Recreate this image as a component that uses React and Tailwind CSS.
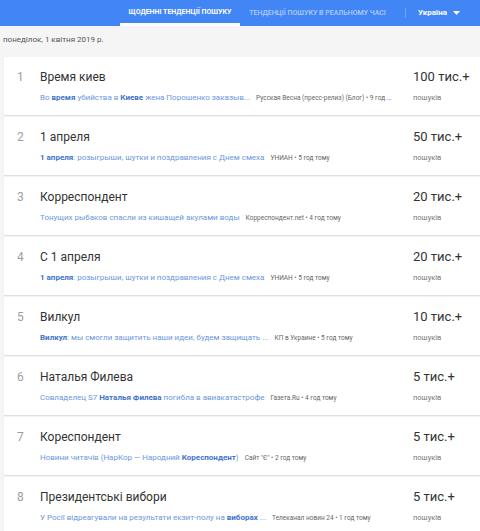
import React from 'react';

const trends = [
  {
    title: 'Время киев',
    count: '100 тис.+',
    parts: [['Во ', false], ['время', true], [' убийства в ', false], ['Киеве', true], [' жена Порошенко заказыв...', false]],
    source: 'Русская Весна (пресс-релиз) (Блог) • 9 год ...',
  },
  {
    title: '1 апреля',
    count: '50 тис.+',
    parts: [['1 апреля', true], [': розыгрыши, шутки и поздравления с Днем смеха', false]],
    source: 'УНИАН • 5 год тому',
  },
  {
    title: 'Корреспондент',
    count: '20 тис.+',
    parts: [['Тонущих рыбаков спасли из кишащей акулами воды', false]],
    source: 'Корреспондент.net • 4 год тому',
  },
  {
    title: 'С 1 апреля',
    count: '20 тис.+',
    parts: [['1 апреля', true], [': розыгрыши, шутки и поздравления с Днем смеха', false]],
    source: 'УНИАН • 5 год тому',
  },
  {
    title: 'Вилкул',
    count: '10 тис.+',
    parts: [['Вилкул', true], [': мы смогли защитить наши идеи, будем защищать ...', false]],
    source: 'КП в Украине • 5 год тому',
  },
  {
    title: 'Наталья Филева',
    count: '5 тис.+',
    parts: [['Совладелец S7 ', false], ['Наталья Филева', true], [' погибла в авиакатастрофе', false]],
    source: 'Газета.Ru • 4 год тому',
  },
  {
    title: 'Кореспондент',
    count: '5 тис.+',
    parts: [['Новини читачів (НарКор — Народний ', false], ['Кореспондент', true], [')', false]],
    source: 'Сайт "Є" • 2 год тому',
  },
  {
    title: 'Президентські вибори',
    count: '5 тис.+',
    parts: [['У Росії відреагували на результати екзит-полу на ', false], ['виборах', true], [' ...', false]],
    source: 'Телеканал новин 24 • 1 год тому',
  },
];

const TrendRow = ({ index, item }) => (
  <div className="flex h-[58px] bg-white pt-[12px] shadow-[0_1px_1px_rgba(0,0,0,0.08)]">
    <div className="w-[36px] shrink-0 pl-[13px] text-[12px] leading-[16px] text-[#9e9e9e]">{index}</div>
    <div className="min-w-0 flex-1">
      <div className="text-[12px] leading-[16px] text-[#333]">{item.title}</div>
      <div className="mt-[8px] flex items-baseline whitespace-nowrap leading-[10px]">
        <span className="text-[8px] text-[#6b97dc]">
          {item.parts.map(([text, bold], i) =>
            bold ? (
              <b key={i} className="font-bold text-[#3f73c9]">{text}</b>
            ) : (
              <span key={i}>{text}</span>
            )
          )}
        </span>
        <span className="ml-[6px] text-[6.5px] text-[#666]">{item.source}</span>
      </div>
    </div>
    <div className="w-[67px] shrink-0">
      <div className="text-[13px] leading-[16px] text-[#333]">{item.count}</div>
      <div className="mt-[8px] text-[7.5px] leading-[10px] text-[#777]">пошуків</div>
    </div>
  </div>
);

const App = () => {
  return (
    <div className="min-h-[531px] w-[480px] overflow-hidden bg-[#f5f5f5] font-['Roboto',sans-serif]">
      <div className="flex h-[26px] items-stretch bg-[#4285f4]">
        <div className="w-[120px]" />
        <div className="flex w-[120px] items-center justify-center border-b-[3px] border-white pt-[2px] text-[7px] font-bold text-white">
          ЩОДЕННІ ТЕНДЕНЦІЇ ПОШУКУ
        </div>
        <div className="flex w-[155px] items-center justify-center text-[7px] font-medium text-white/60">
          ТЕНДЕНЦІЇ ПОШУКУ В РЕАЛЬНОМУ ЧАСІ
        </div>
        <div className="my-[8px] ml-[10px] w-px bg-white/25" />
        <div className="flex items-center pl-[12px] text-[8px] font-bold text-white">
          Україна
          <svg width="7" height="4" viewBox="0 0 7 4" className="ml-[6px]">
            <path d="M0 0h7L3.5 4z" fill="white" />
          </svg>
        </div>
      </div>
      <div className="h-[31px] pl-[3px] pt-[9px] text-[8px] leading-[10px] text-[#555]">
        понеділок, 1 квітня 2019 р.
      </div>
      <div className="ml-[4px] flex flex-col gap-[2px]">
        {trends.map((item, i) => (
          <TrendRow key={i} index={i + 1} item={item} />
        ))}
      </div>
    </div>
  );
};

export default App;
